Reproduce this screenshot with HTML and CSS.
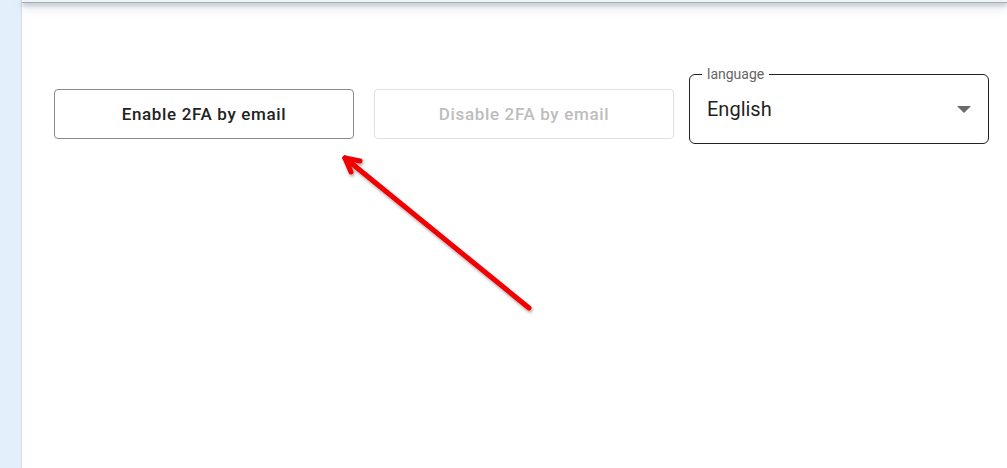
FILE: index.html
```html
<!DOCTYPE html>
<html>
<head>
<meta charset="utf-8">
<link rel="stylesheet" href="styles.css">
</head>
<body>
<div class="app">
  <aside class="sidebar"></aside>
  <main class="main">
    <div class="topbar"></div>
    <div class="content">
      <div class="row">
        <button class="btn btn-active">Enable 2FA by email</button>
        <button class="btn btn-disabled" disabled>Disable 2FA by email</button>
        <div class="select">
          <span class="select-label">language</span>
          <span class="select-value">English</span>
          <svg class="select-arrow" width="14" height="7" viewBox="0 0 14 7"><path d="M0 0 L14 0 L7 7 Z" fill="#6b6b6b"/></svg>
        </div>
      </div>
    </div>
  </main>
</div>
<svg class="annotation" width="1007" height="468" viewBox="0 0 1007 468">
  <defs>
    <filter id="sh" x="-20%" y="-20%" width="140%" height="140%">
      <feDropShadow dx="1" dy="2" stdDeviation="1.5" flood-color="#000" flood-opacity="0.35"/>
    </filter>
  </defs>
  <g filter="url(#sh)" stroke="#f00000" stroke-width="5" stroke-linecap="round" stroke-linejoin="round" fill="none">
    <path d="M529 308 L345 158"/>
    <path d="M345 158 L360 161"/>
    <path d="M345 158 L351 172"/>
  </g>
</svg>
</body>
</html>
```
FILE: styles.css
```css
html, body {
  margin: 0;
  padding: 0;
  background: #ffffff;
}
body {
  font-family: Roboto, "Liberation Sans", sans-serif;
  width: 1007px;
  height: 468px;
  overflow: hidden;
  position: relative;
}
.app {
  display: flex;
  height: 468px;
}
.sidebar {
  width: 21px;
  flex: none;
  background: #e3f0fc;
  border-right: 1px solid #d5dee8;
}
.main {
  flex: 1;
  display: flex;
  flex-direction: column;
}
.topbar {
  height: 2px;
  background: #f0f3f6;
  border-bottom: 1px solid #a3adba;
  box-shadow: 0 2px 4px rgba(120, 135, 155, 0.6), 0 5px 9px rgba(140, 155, 175, 0.45);
  position: relative;
  z-index: 1;
}
.content {
  padding: 71px 0 0 32px;
}
.row {
  display: flex;
  align-items: flex-start;
}
.btn {
  width: 300px;
  height: 50px;
  margin-top: 15px;
  border-radius: 4px;
  background: #fff;
  font-family: Roboto, "Liberation Sans", sans-serif;
  font-size: 17px;
  font-weight: 500;
  letter-spacing: 0.65px;
  padding: 0;
}
.btn-active {
  border: 1px solid #8a8a8a;
  color: #222222;
}
.btn-disabled {
  border: 1px solid #e0e0e0;
  color: #bdbdbd;
  margin-left: 20px;
}
.select {
  position: relative;
  margin-left: 15px;
  width: 300px;
  height: 70px;
  box-sizing: border-box;
  border: 1px solid #222;
  border-radius: 6px;
  display: flex;
  align-items: center;
  padding-left: 17px;
}
.select-label {
  position: absolute;
  top: -9px;
  left: 12px;
  padding: 0 5px;
  background: #fff;
  font-size: 14px;
  color: #666;
  line-height: 16px;
}
.select-value {
  font-size: 20px;
  color: #1f1f1f;
  flex: 1;
}
.select-arrow {
  margin-right: 17px;
}
.annotation {
  position: absolute;
  left: 0;
  top: 0;
  pointer-events: none;
}
```
